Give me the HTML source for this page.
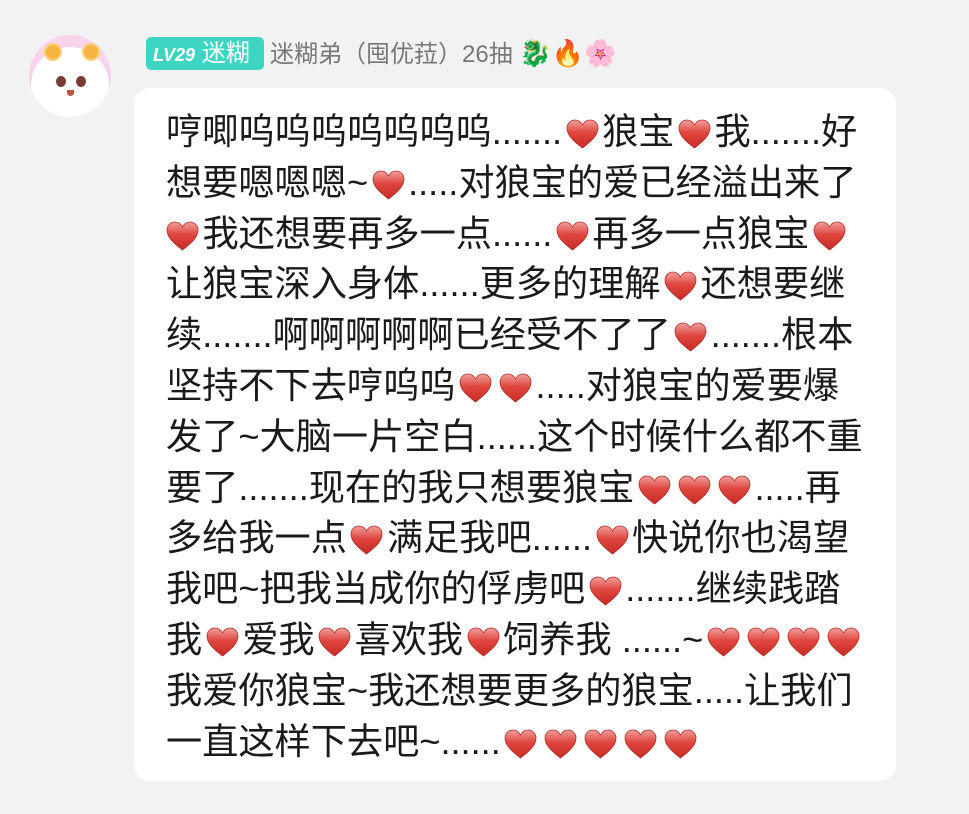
<!DOCTYPE html>
<html><head><meta charset="utf-8"><style>
body{margin:0;width:969px;height:814px;background:#f2f2f2;position:relative;overflow:hidden;font-family:"Liberation Sans","Noto Sans CJK SC",sans-serif}
.card{position:absolute;left:134px;top:88px;width:762px;height:693px;background:#fff;border-radius:16px}
.txt{position:absolute;left:166px;top:107px;font-size:36.2px;line-height:50.8px;color:#1a1a1a;white-space:nowrap}
.d{letter-spacing:0}
.h{display:inline-block;width:33px;height:30px;vertical-align:-5px;margin:0 3.5px}
.badge{position:absolute;left:146px;top:37px;width:118px;height:33px;background:#3fd5c3;border-radius:5px;color:#fff;font-size:24px;line-height:33px}
.name{position:absolute;left:270px;top:37px;font-size:24px;line-height:33px;color:#777}
</style></head><body>
<svg width="0" height="0" style="position:absolute"><defs>
<linearGradient id="g" x1="0" y1="0" x2="0" y2="1"><stop offset="0" stop-color="#f2a0a0"/><stop offset="0.45" stop-color="#e0463e"/><stop offset="1" stop-color="#c62c25"/></linearGradient>
<symbol id="ht" viewBox="0 0 33 30"><path d="M16.5 29 C9 23 1 17 1 9 C1 4 5 1 9 1 C12.5 1 15 3 16.5 6 C18 3 20.5 1 24 1 C28 1 32 4 32 9 C32 17 24 23 16.5 29Z" fill="url(#g)" stroke="#b32a24" stroke-width="0.8"/></symbol>
</defs></svg>
<div style="position:absolute;left:29px;top:35px;width:82px;height:82px;border-radius:50%;background:#f7d3ec;overflow:hidden">
<div style="position:absolute;left:2px;top:12px;width:78px;height:76px;border-radius:50%;background:#fff"></div>
<div style="position:absolute;left:15px;top:8px;width:14px;height:14px;border-radius:50%;background:#f5b540;border:2px solid #f8cf7a"></div>
<div style="position:absolute;left:53px;top:8px;width:14px;height:14px;border-radius:50%;background:#f5b540;border:2px solid #f8cf7a"></div>
<div style="position:absolute;left:27px;top:41px;width:10px;height:11px;border-radius:50%;background:#7a3a36"></div>
<div style="position:absolute;left:47px;top:41px;width:10px;height:11px;border-radius:50%;background:#7a3a36"></div>
<div style="position:absolute;left:38px;top:55px;width:7px;height:6px;border-radius:0 0 4px 4px;background:#c0504a"></div>
</div>
<div class="badge"><b style="font-style:italic;font-size:18px;margin-left:7px">LV29</b> 迷糊</div>
<div class="name">迷糊弟（囤优菈）26抽 <span style="font-size:26px">🐉🔥🌸</span></div>
<div class="card"></div>
<div class="txt">
哼唧呜呜呜呜呜呜呜<span class="d">.......</span><svg class="h"><use href="#ht"/></svg>狼宝<svg class="h"><use href="#ht"/></svg>我<span class="d">.......</span>好<br>
想要嗯嗯嗯<span class="d">~</span><svg class="h"><use href="#ht"/></svg><span class="d">.....</span>对狼宝的爱已经溢出来了<br>
<svg class="h" style="margin-left:0"><use href="#ht"/></svg>我还想要再多一点<span class="d">......</span><svg class="h"><use href="#ht"/></svg>再多一点狼宝<svg class="h"><use href="#ht"/></svg><br>
让狼宝深入身体<span class="d">......</span>更多的理解<svg class="h"><use href="#ht"/></svg>还想要继<br>
续<span class="d">.......</span>啊啊啊啊啊已经受不了了<svg class="h"><use href="#ht"/></svg><span class="d">.......</span>根本<br>
坚持不下去哼呜呜<svg class="h"><use href="#ht"/></svg><svg class="h"><use href="#ht"/></svg><span class="d">.....</span>对狼宝的爱要爆<br>
发了<span class="d">~</span>大脑一片空白<span class="d">......</span>这个时候什么都不重<br>
要了<span class="d">.......</span>现在的我只想要狼宝<svg class="h"><use href="#ht"/></svg><svg class="h"><use href="#ht"/></svg><svg class="h"><use href="#ht"/></svg><span class="d">.....</span>再<br>
多给我一点<svg class="h"><use href="#ht"/></svg>满足我吧<span class="d">......</span><svg class="h"><use href="#ht"/></svg>快说你也渴望<br>
我吧<span class="d">~</span>把我当成你的俘虏吧<svg class="h"><use href="#ht"/></svg><span class="d">.......</span>继续践踏<br>
我<svg class="h"><use href="#ht"/></svg>爱我<svg class="h"><use href="#ht"/></svg>喜欢我<svg class="h"><use href="#ht"/></svg>饲养我 <span class="d">......~</span><svg class="h"><use href="#ht"/></svg><svg class="h"><use href="#ht"/></svg><svg class="h"><use href="#ht"/></svg><svg class="h"><use href="#ht"/></svg><br>
我爱你狼宝<span class="d">~</span>我还想要更多的狼宝<span class="d">.....</span>让我们<br>
一直这样下去吧<span class="d">~......</span><svg class="h"><use href="#ht"/></svg><svg class="h"><use href="#ht"/></svg><svg class="h"><use href="#ht"/></svg><svg class="h"><use href="#ht"/></svg><svg class="h"><use href="#ht"/></svg>
</div>
</body></html>
